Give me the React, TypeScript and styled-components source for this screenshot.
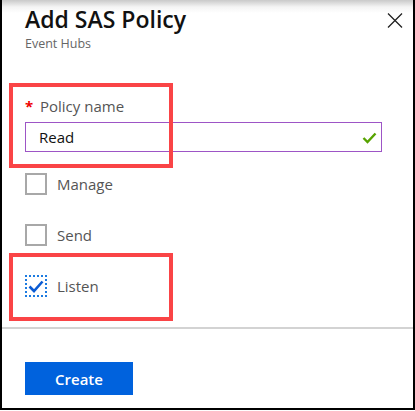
import React, { useState } from 'react'
import styled, { createGlobalStyle } from 'styled-components'

const GlobalStyle = createGlobalStyle`
  body {
    margin: 0;
    font-family: 'Open Sans', 'Noto Sans', sans-serif;
    background: #fff;
  }
`

const App = () => {
  const [name, setName] = useState('Read')
  const [perms, setPerms] = useState({ manage: false, send: false, listen: true })

  const toggle = (key: 'manage' | 'send' | 'listen') => {
    setPerms({ ...perms, [key]: !perms[key] })
  }

  return (
    <>
      <GlobalStyle />
      <Panel>
        <Header>
          <div>
            <Title>Add SAS Policy</Title>
            <Subtitle>Event Hubs</Subtitle>
          </div>
          <CloseButton aria-label="Close">
            <svg width="16" height="15" viewBox="0 0 16 15">
              <path d="M1 0.5 L15 14.5 M15 0.5 L1 14.5" stroke="#222" strokeWidth="1.3" fill="none" />
            </svg>
          </CloseButton>
        </Header>

        <Form>
          <Label>
            <Required>*</Required>
            Policy name
          </Label>
          <InputBox>
            <Input value={name} onChange={(e) => setName(e.target.value)} />
            <svg width="15" height="12" viewBox="0 0 15 12">
              <path d="M1.5 6 L5.5 10 L13.5 1.5" stroke="#57a300" strokeWidth="2.4" fill="none" />
            </svg>
          </InputBox>

          <CheckList>
            <CheckRow onClick={() => toggle('manage')}>
              <Box checked={perms.manage} />
              <CheckText>Manage</CheckText>
            </CheckRow>
            <CheckRow onClick={() => toggle('send')}>
              <Box checked={perms.send} />
              <CheckText>Send</CheckText>
            </CheckRow>
            <CheckRow onClick={() => toggle('listen')}>
              <Box checked={perms.listen} $focus>
                {perms.listen && (
                  <svg width="16" height="13" viewBox="0 0 16 13">
                    <path d="M1.5 6.5 L6 11 L14.5 1.5" stroke="#0b5bd3" strokeWidth="2.6" fill="none" />
                  </svg>
                )}
              </Box>
              <CheckText>Listen</CheckText>
            </CheckRow>
          </CheckList>
        </Form>

        <Footer>
          <CreateButton>Create</CreateButton>
        </Footer>

        <Highlight $top={83} $height={85} />
        <Highlight $top={253} $height={68} />
      </Panel>
    </>
  )
}

const Panel = styled.div`
  position: relative;
  width: 415px;
  height: 410px;
  box-sizing: border-box;
  border: 2px solid #000;
  border-top: none;
  background: linear-gradient(to bottom, #c9c9c9 0, #f4f4f4 7px, #fff 13px);
`

const Header = styled.div`
  display: flex;
  justify-content: space-between;
  align-items: flex-start;
  padding: 4px 10px 0 23px;
`

const Title = styled.h1`
  margin: 0;
  font-size: 23px;
  line-height: 31px;
  font-weight: 600;
  color: #111;
`

const Subtitle = styled.div`
  font-size: 12.5px;
  line-height: 17px;
  color: #666;
`

const CloseButton = styled.button`
  margin-top: 9px;
  padding: 0;
  border: 0;
  background: none;
  display: flex;
  cursor: pointer;
`

const Form = styled.div`
  padding: 44px 29px 30px 23px;
`

const Label = styled.div`
  display: flex;
  align-items: baseline;
  gap: 7px;
  font-size: 15px;
  line-height: 20px;
  color: #555;
`

const Required = styled.span`
  color: #e00;
  font-weight: 700;
  width: 8px;
`

const InputBox = styled.div`
  margin-top: 6px;
  width: 357px;
  height: 30px;
  box-sizing: border-box;
  border: 1px solid #9d55c6;
  display: flex;
  align-items: center;
  padding: 0 4px 0 13px;

  svg {
    margin-top: 1px;
  }
`

const Input = styled.input`
  flex: 1;
  border: 0;
  padding: 0;
  height: 100%;
  font-family: inherit;
  font-size: 15px;
  color: #111;
  background: transparent;

  &:focus {
    outline: none;
  }
`

const CheckList = styled.div`
  margin-top: 21px;
  display: flex;
  flex-direction: column;
  gap: 29px;
`

const CheckRow = styled.label`
  display: flex;
  align-items: center;
  gap: 10px;
  cursor: pointer;
`

const Box = styled.span<{ checked: boolean; $focus?: boolean }>`
  width: 22px;
  height: 22px;
  box-sizing: border-box;
  border: 2px ${(p) => (p.$focus ? 'dotted #1d7be0' : 'solid #a8a8a8')};
  display: flex;
  align-items: center;
  justify-content: center;
`

const CheckText = styled.span`
  font-size: 15px;
  line-height: 20px;
  color: #555;
`

const Footer = styled.div`
  border-top: 2px solid #d3d3d3;
  padding: 33px 23px;
`

const CreateButton = styled.button`
  width: 108px;
  height: 33px;
  border: 0;
  background: #0062dd;
  color: #fff;
  font-family: inherit;
  font-size: 15px;
  font-weight: 600;
  cursor: pointer;
`

const Highlight = styled.div<{ $top: number; $height: number }>`
  position: absolute;
  left: 7px;
  top: ${(p) => p.$top}px;
  width: 164px;
  height: ${(p) => p.$height}px;
  box-sizing: border-box;
  border: 4px solid #fa4446;
  pointer-events: none;
`

export default App
